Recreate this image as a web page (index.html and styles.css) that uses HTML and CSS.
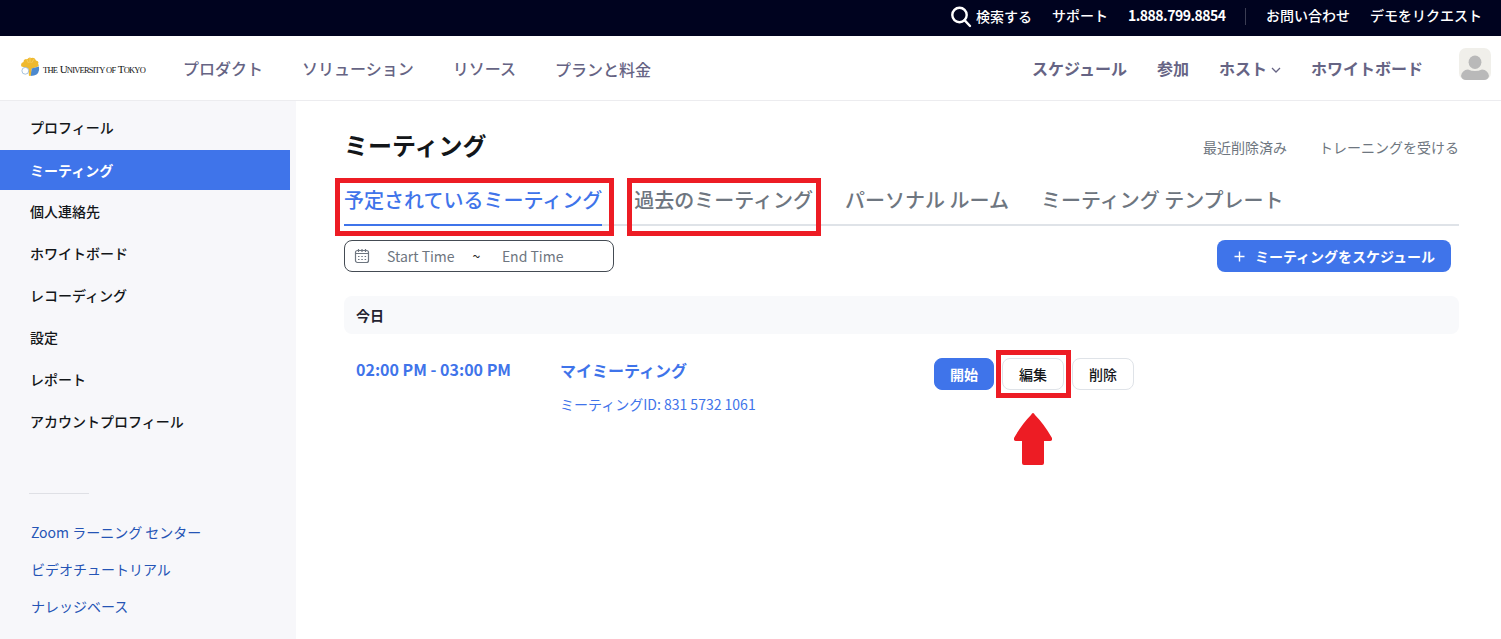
FILE: index.html
```html
<!DOCTYPE html>
<html lang="ja">
<head>
<meta charset="utf-8">
<title>ミーティング</title>
<link rel="stylesheet" href="styles.css">
</head>
<body>
<div class="topbar">
  <a class="search"><svg width="22" height="22" viewBox="0 0 22 22"><circle cx="9.5" cy="9" r="7.2"/><path d="M14.5 14.2 20 20"/></svg><span>検索する</span></a>
  <a class="support">サポート</a>
  <a class="phone">1.888.799.8854</a>
  <span class="divider"></span>
  <a class="contact">お問い合わせ</a>
  <a class="demo">デモをリクエスト</a>
</div>
<header class="header">
  <div class="logo">
    <svg width="20" height="20" viewBox="0 0 20 20">
      <path fill="#efb92e" d="M10 12 1.500 9.500Q0 6 3.500 5 3.500 1.500 7.500 2 9-.5 11.500 1 15 0 16 3.500 19.500 4 18 7 19.500 8 18 9.500L11 12z"/>
      <path fill="#4c89cf" d="M11.500 11.500 19 9.500Q20 17 14 18.500L10.500 19z"/>
      <path fill="#efb92e" d="M8 9h3.500L11 18.500 9 19z"/>
      <circle cx="5.300" cy="13.800" r="3.400" fill="#fff" stroke="#91b4d7" stroke-width=".8"/>
      <path stroke="#f8dc91" stroke-width=".5" d="M8.500 6 6.500 2M10 6V1M11.500 6l2.500-4"/>
    </svg>
    <span class="wordmark"><small>THE</small> U<small>NIVERSITY OF</small> T<small>OKYO</small></span>
  </div>
  <nav class="nav-main"><a>プロダクト</a><a>ソリューション</a><a>リソース</a><a class="plans">プランと料金</a></nav>
  <nav class="nav-user">
    <a>スケジュール</a><a>参加</a>
    <a class="host">ホスト<svg width="10" height="6" viewBox="0 0 10 6"><path d="M1 1 5 5 9 1"/></svg></a>
    <a>ホワイトボード</a>
  </nav>
  <svg class="avatar" width="32" height="32" viewBox="0 0 32 32"><rect width="32" height="32" rx="7" fill="#f0efea"/><ellipse cx="16" cy="14.2" rx="6.4" ry="6.8" fill="#b9b9b9"/><path fill="#b9b9b9" d="M2 28Q3 22 9 21.5 16 24.5 23 21.5 29 22 30 28 29 32 25 32H7Q3 32 2 28z"/></svg>
</header>
<div class="layout">
  <aside class="sidebar">
    <ul class="menu">
      <li>プロフィール</li><li class="active">ミーティング</li><li>個人連絡先</li><li>ホワイトボード</li><li>レコーディング</li><li>設定</li><li>レポート</li><li>アカウントプロフィール</li>
    </ul>
    <div class="rule"></div>
    <ul class="links"><li>Zoom ラーニング センター</li><li>ビデオチュートリアル</li><li>ナレッジベース</li></ul>
  </aside>
  <main class="content">
    <div class="title-row"><h1>ミーティング</h1><div class="title-links"><a>最近削除済み</a><a>トレーニングを受ける</a></div></div>
    <div class="tabs">
      <a class="tab current">予定されているミーティング<span class="mark mark-upcoming"></span></a>
      <a class="tab">過去のミーティング<span class="mark mark-past"></span></a>
      <a class="tab">パーソナル ルーム</a>
      <a class="tab">ミーティング テンプレート</a>
    </div>
    <div class="tools">
      <div class="range">
        <svg width="16" height="16" viewBox="0 0 16 16"><rect x="1.500" y="2.500" width="13" height="12" rx="2"/><path d="M1.500 5.500h13M4.500 1v3M8 1v3M11.500 1v3"/><path class="dots" d="M4 8.500h1.500M7.300 8.500h1.500M10.600 8.500h1.500M4 11.500h1.500M7.300 11.500h1.500M10.600 11.500h1.500"/></svg>
        <span class="start">Start Time</span><span class="tilde">~</span><span class="end">End Time</span>
      </div>
      <button class="schedule"><svg width="11" height="11" viewBox="0 0 11 11"><path d="M5.500 .5v10M.5 5.500h10"/></svg><span>ミーティングをスケジュール</span></button>
    </div>
    <div class="day">今日</div>
    <div class="meeting">
      <div class="time">02:00 PM - 03:00 PM</div>
      <div class="info"><div class="name">マイミーティング</div><div class="id">ミーティングID: 831 5732 1061</div></div>
      <div class="actions">
        <button class="btn primary">開始</button>
        <div class="edit"><button class="btn">編集</button><span class="mark mark-edit"></span><svg class="arrow" width="38" height="52" viewBox="0 0 38 52"><path d="M19 0Q20 0 21 2Q30 11 38 25Q38.500 28 36 28H30V50Q30 52 28 52H10Q8 52 8 50V28H2Q-.5 28 0 25Q8 11 17 2Q18 0 19 0z"/></svg></div>
        <button class="btn">削除</button>
      </div>
    </div>
  </main>
</div>
</body>
</html>
```
FILE: styles.css
```css
* { box-sizing: border-box; }
body { margin: 0; height: 639px; overflow: hidden; background: #fff; font: 14px/20px "Noto Sans CJK JP", sans-serif; color: #131619; }
ul { list-style: none; margin: 0; padding: 0; }
button { font: inherit; margin: 0; padding: 0; }
a, span, div, li, button { white-space: nowrap; }

.topbar { height: 36px; background: #00031f; color: #fff; display: flex; align-items: center; justify-content: flex-end; padding: 0 19px 6px 0; font-weight: 500; }
.search { display: flex; align-items: center; gap: 4px; margin-right: 20px; padding-top: 2px; }
.search svg { fill: none; stroke: #fff; stroke-width: 2.4; stroke-linecap: round; margin-top: 2px; }
.support { margin-right: 20px; }
.phone { margin-right: 20px; width: 97px; font-weight: 700; letter-spacing: -.5px; }
.divider { width: 1px; height: 17px; background: #3b3d53; margin: 2px 20px 0 0; }
.contact { margin-right: 20px; }

.header { height: 65px; border-bottom: 1px solid #ececef; display: flex; align-items: center; padding: 0 10px 0 20px; color: #666484; font-size: 16px; font-weight: 500; }
.logo { width: 163px; display: flex; align-items: center; gap: 3px; padding-bottom: 2px; }
.wordmark { font: 11px/20px "Liberation Serif", serif; color: #111; letter-spacing: -.8px; word-spacing: .6px; padding-top: 4px; }
.wordmark small { font-size: 8.5px; }
.nav-main { display: flex; gap: 39px; }
.plans { padding-top: 1px; }
.nav-user { display: flex; gap: 30px; margin-left: auto; margin-right: 36px; font-weight: 700; }
.host { display: flex; align-items: center; gap: 4px; }
.host svg { fill: none; stroke: #666484; stroke-width: 1.3; margin-top: 4px; }
.avatar { margin-bottom: 9px; }

.layout { display: flex; height: 538px; }
.sidebar { width: 296px; background: #f7f7fa; padding-top: 7px; }
.menu { display: grid; gap: 2px; }
.menu li { width: 290px; height: 40px; padding-left: 30px; line-height: 39px; font-weight: 500; color: #131619; }
.menu .active { background: #3f74ea; color: #fff; font-weight: 700; line-height: 40px; }
.rule { width: 60px; height: 1px; background: #dfe0e5; margin: 51px 0 0 29px; }
.links { padding: 20px 0 0 31px; color: #2554b5; }
.links li { height: 37px; line-height: 36px; }

.content { width: 1163px; padding: 24px 0 0 48px; }
.title-row { display: flex; justify-content: space-between; height: 45px; }
h1 { font-size: 24px; line-height: 40px; font-weight: 700; margin: 0; }
.title-links { display: flex; gap: 32px; line-height: 44px; color: #6e7680; }
.tabs { display: flex; gap: 32px; height: 56px; border-bottom: 2px solid #dfe3e8; }
.tab { position: relative; height: 56px; font-size: 20px; line-height: 60px; font-weight: 500; color: #6e7680; }
.current { color: #3f74ea; border-bottom: 2px solid #3f74ea; }
.mark { position: absolute; border: 5px solid #ed1c24; pointer-events: none; }
.mark-upcoming { left: -9px; top: 8px; width: 279px; height: 58px; }
.mark-past { left: -7px; top: 8px; width: 194px; height: 58px; }
.tools { display: flex; justify-content: space-between; align-items: center; padding: 14px 8px 24px 0; }
.range { width: 270px; height: 32px; border: 1px solid #444b53; border-radius: 8px; display: flex; align-items: center; padding-left: 9px; color: #6e7680; }
.range svg { fill: none; stroke: #6e7680; stroke-width: 1.2; }
.start { margin-left: 17px; }
.tilde { margin: 0 21.5px 0 18px; color: #222; font-size: 14px; }
.schedule { width: 234px; height: 32px; border: 0; border-radius: 8px; background: #3f74ea; color: #fff; font-weight: 700; display: flex; align-items: center; justify-content: center; gap: 10px; padding-left: 1px; }
.schedule svg { fill: none; stroke: #fff; stroke-width: 1.4; }
.day { height: 38px; line-height: 38px; border-radius: 8px; background: #f8f9fb; padding-left: 12px; font-weight: 700; color: #222230; }
.meeting { display: flex; color: #3f74ea; padding: 24px 0 0 12px; }
.time { width: 204px; font-size: 16px; line-height: 23px; font-weight: 700; }
.info { width: 374px; }
.name { font-size: 16px; line-height: 24px; font-weight: 700; }
.id { line-height: 20px; margin-top: 12px; }
.actions { display: flex; gap: 8px; }
.btn { display: block; width: 62px; height: 32px; border: 1px solid #dfe3e8; border-radius: 8px; background: #fff; color: #131619; font-weight: 500; }
.primary { width: 60px; background: #3f74ea; border-color: #3f74ea; color: #fff; font-weight: 700; }
.edit { position: relative; }
.mark-edit { left: -6px; top: -8px; width: 75px; height: 48px; }
.arrow { position: absolute; left: 12px; top: 55px; fill: #ed1c24; }
```
